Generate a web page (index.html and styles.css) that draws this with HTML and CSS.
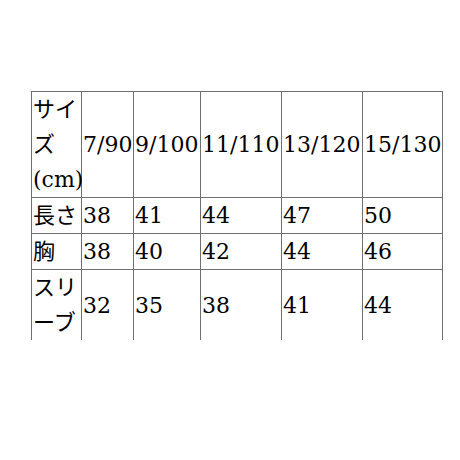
FILE: index.html
```html
<!DOCTYPE html>
<html lang="ja">
<head>
<meta charset="utf-8">
<link rel="stylesheet" href="styles.css">
</head>
<body>
<table class="size-table">
  <colgroup>
    <col class="c-label">
    <col class="c-s1">
    <col class="c-s2">
    <col class="c-s3">
    <col class="c-s4">
    <col class="c-s5">
  </colgroup>
  <tr>
    <td>サイズ(cm)</td>
    <td>7/90</td>
    <td>9/100</td>
    <td>11/110</td>
    <td>13/120</td>
    <td>15/130</td>
  </tr>
  <tr>
    <td>長さ</td>
    <td>38</td>
    <td>41</td>
    <td>44</td>
    <td>47</td>
    <td>50</td>
  </tr>
  <tr>
    <td>胸</td>
    <td>38</td>
    <td>40</td>
    <td>42</td>
    <td>44</td>
    <td>46</td>
  </tr>
  <tr class="last-row">
    <td>スリーブ</td>
    <td>32</td>
    <td>35</td>
    <td>38</td>
    <td>41</td>
    <td>44</td>
  </tr>
</table>
</body>
</html>
```

FILE: styles.css
```css
html, body {
  margin: 0;
  padding: 0;
  background: #ffffff;
}

body {
  padding: 91px 0 0 31px;
}

.size-table {
  border-collapse: collapse;
  table-layout: fixed;
  width: 411px;
  font-family: "DejaVu Serif", "Noto Sans CJK JP", serif;
  font-size: 22px;
  line-height: 35px;
  color: #000000;
}

.c-label { width: 50px; }
.c-s1 { width: 52px; }
.c-s2 { width: 67px; }
.c-s3 { width: 81px; }
.c-s4 { width: 81px; }
.c-s5 { width: 80px; }

.size-table td {
  border: 1px solid #707070;
  padding: 0 0 0 1px;
  vertical-align: middle;
  text-align: left;
  white-space: normal;
  overflow: visible;
}

.size-table .last-row td {
  border-bottom: none;
}
```
